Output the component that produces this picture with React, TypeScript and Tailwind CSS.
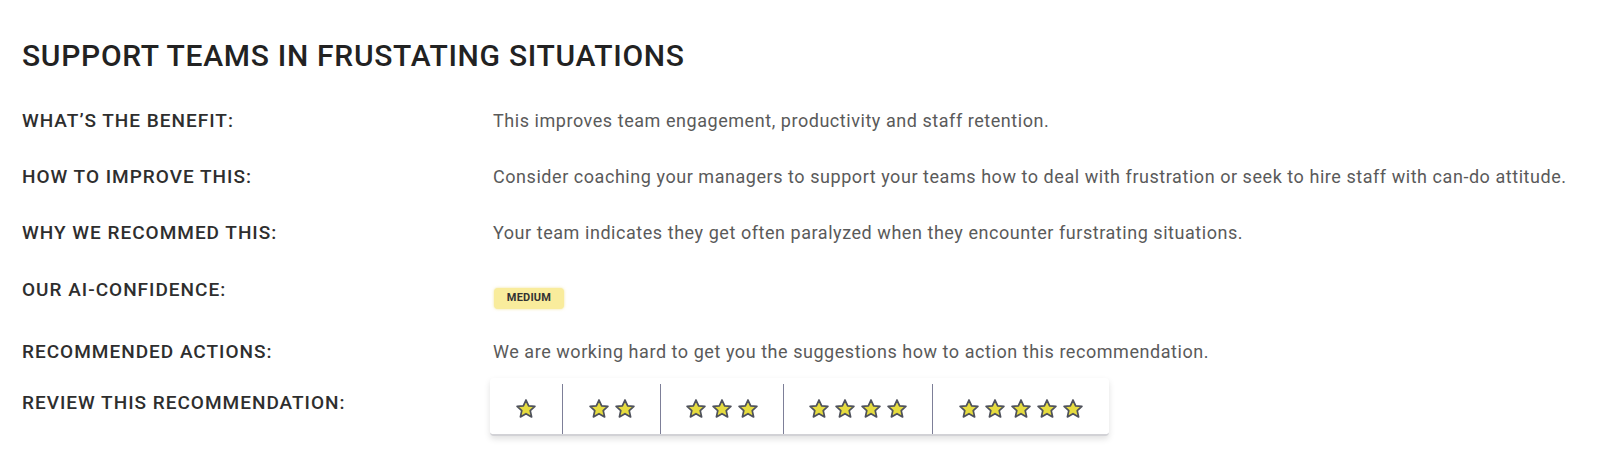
import React from "react";

const Star = () => (
  <svg width="22" height="22" viewBox="0 0 24 24" className="shrink-0">
    <path
      d="M12 2.2l2.9 6.3 6.8.7-5.1 4.6 1.5 6.8L12 17.1l-6.1 3.5 1.5-6.8-5.1-4.6 6.8-.7z"
      fill="#e6dc3f"
      stroke="#4f525c"
      strokeWidth="1.9"
      strokeLinejoin="round"
    />
  </svg>
);

const segs = [
  { n: 1, w: "w-[72px]" },
  { n: 2, w: "w-[98px]" },
  { n: 3, w: "w-[123px]" },
  { n: 4, w: "w-[149px]" },
  { n: 5, w: "w-[177px]" },
];

const Label = ({ children, className = "" }: { children: React.ReactNode; className?: string }) => (
  <div className={`w-[471px] shrink-0 text-[19px] leading-[24px] font-medium tracking-[1px] text-[#2e2e2e] ${className}`}>
    {children}
  </div>
);

const Value = ({ children }: { children: React.ReactNode }) => (
  <div className="text-[18px] leading-[24px] text-[#5a5a5a] tracking-[0.55px] whitespace-nowrap">{children}</div>
);

export default function App() {
  return (
    <div
      className="w-[1606px] h-[456px] bg-white pl-[22px] pt-[36px] overflow-hidden"
      style={{ fontFamily: "Roboto, 'Noto Sans', sans-serif" }}
    >
      <h1 className="text-[30px] leading-[40px] font-medium text-[#222] tracking-[0.7px]">
        SUPPORT TEAMS IN FRUSTATING SITUATIONS
      </h1>
      <div className="mt-[33px] flex flex-col">
        <div className="flex h-[56px] items-start">
          <Label>WHAT’S THE BENEFIT:</Label>
          <Value>This improves team engagement, productivity and staff retention.</Value>
        </div>
        <div className="flex h-[56px] items-start">
          <Label>HOW TO IMPROVE THIS:</Label>
          <Value>
            Consider coaching your managers to support your teams how to deal with frustration or seek to hire staff with can-do attitude.
          </Value>
        </div>
        <div className="flex h-[57px] items-start">
          <Label>WHY WE RECOMMED THIS:</Label>
          <Value>Your team indicates they get often paralyzed when they encounter furstrating situations.</Value>
        </div>
        <div className="flex h-[62px] items-start">
          <Label>OUR AI-CONFIDENCE:</Label>
          <div className="mt-[10px] ml-[1px] flex h-[21px] w-[70px] items-center justify-center rounded-[4px] bg-[#f9ec9c] text-[11px] font-bold tracking-[0.2px] text-[#333] shadow-[0_0_3px_rgba(230,210,90,0.6)]">
            MEDIUM
          </div>
        </div>
        <div className="flex h-[38px] items-start">
          <Label>RECOMMENDED ACTIONS:</Label>
          <Value>We are working hard to get you the suggestions how to action this recommendation.</Value>
        </div>
        <div className="flex items-start">
          <Label className="pt-[13px]">REVIEW THIS RECOMMENDATION:</Label>
          <div className="-ml-[3px] flex h-[58px] rounded-[4px] border-b-2 border-[#d2d2d6] bg-white shadow-[0_3px_6px_rgba(0,0,0,0.12)]">
            {segs.map((s, i) => (
              <div
                key={s.n}
                className={`${s.w} mt-[6px] flex items-center justify-center gap-[4px] ${i > 0 ? "border-l border-[#7d7f98]" : ""}`}
              >
                {Array.from({ length: s.n }).map((_, k) => (
                  <Star key={k} />
                ))}
              </div>
            ))}
          </div>
        </div>
      </div>
    </div>
  );
}
